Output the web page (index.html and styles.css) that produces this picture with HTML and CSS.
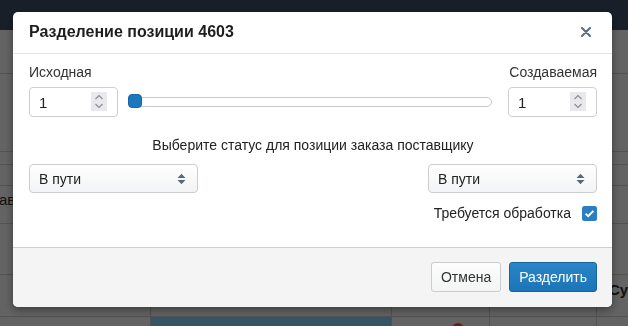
FILE: index.html
```html
<!DOCTYPE html>
<html lang="ru">
<head>
    <meta charset="UTF-8">
    <meta name="viewport" content="width=device-width, initial-scale=1.0">
    <title>Разделение позиции</title>
    <link rel="stylesheet" href="styles.css">
</head>
<body>
    <div class="page">
        <div class="navbar"></div>
        <div class="table">
            <div class="trow h44"></div>
            <div class="trow h78"></div>
            <div class="trow h13"></div>
            <div class="trow h21"></div>
            <div class="trow h38"><span class="cut-left">ав</span></div>
            <div class="trow h51"></div>
            <div class="trow cols h42">
                <div class="cell c1"></div>
                <div class="cell c2"></div>
                <div class="cell c3"></div>
                <div class="cell c4"></div>
                <div class="cell c5"><span class="cut-right">Су</span></div>
            </div>
            <div class="trow cols last">
                <div class="cell c1"></div>
                <div class="cell c2 selected"></div>
                <div class="cell c3"><span class="dot"></span></div>
                <div class="cell c4"></div>
                <div class="cell c5"></div>
            </div>
        </div>
    </div>

    <div class="backdrop"></div>

    <div class="modal">
        <div class="modal-header">
            <h4 class="modal-title">Разделение позиции 4603</h4>
            <button class="close" type="button">
                <svg width="10" height="10" viewBox="0 0 10 10"><path d="M1 1L9 9M9 1L1 9" stroke="#5c6b7a" stroke-width="2" stroke-linecap="round"/></svg>
            </button>
        </div>

        <div class="modal-body">
            <div class="qty-labels">
                <span>Исходная</span>
                <span>Создаваемая</span>
            </div>
            <div class="qty-row">
                <div class="num-input">
                    <span class="num-value">1</span>
                    <span class="spin">
                        <svg width="16" height="19" viewBox="0 0 16 19"><path d="M4.5 7L8 3.5L11.5 7" fill="none" stroke="#8a8a93" stroke-width="1.1"/><path d="M4.5 12L8 15.5L11.5 12" fill="none" stroke="#8a8a93" stroke-width="1.1"/></svg>
                    </span>
                </div>
                <div class="slider">
                    <div class="track">
                        <span class="thumb" style="left: 0%"></span>
                    </div>
                </div>
                <div class="num-input">
                    <span class="num-value">1</span>
                    <span class="spin">
                        <svg width="16" height="19" viewBox="0 0 16 19"><path d="M4.5 7L8 3.5L11.5 7" fill="none" stroke="#8a8a93" stroke-width="1.1"/><path d="M4.5 12L8 15.5L11.5 12" fill="none" stroke="#8a8a93" stroke-width="1.1"/></svg>
                    </span>
                </div>
            </div>

            <div class="status-title">Выберите статус для позиции заказа поставщику</div>
            <div class="status-row">
                <div class="select">
                    <span>В пути</span>
                    <svg width="9" height="12" viewBox="0 0 9 12"><path d="M0.5 5L4.5 0.8L8.5 5Z M0.5 7L4.5 11.2L8.5 7Z" fill="#5b6977"/></svg>
                </div>
                <div class="select">
                    <span>В пути</span>
                    <svg width="9" height="12" viewBox="0 0 9 12"><path d="M0.5 5L4.5 0.8L8.5 5Z M0.5 7L4.5 11.2L8.5 7Z" fill="#5b6977"/></svg>
                </div>
            </div>

            <label class="check-row">
                <span>Требуется обработка</span>
                <svg width="15" height="15" viewBox="0 0 15 15"><rect x="0" y="0" width="15" height="15" rx="2.5" fill="#2a7fc4"/><path d="M3.6 7.6L6.2 10.1L11.4 4.9" fill="none" stroke="#fff" stroke-width="2"/></svg>
            </label>
        </div>

        <div class="modal-footer">
            <button class="btn btn-default" type="button">Отмена</button>
            <button class="btn btn-primary" type="button">Разделить</button>
        </div>
    </div>
</body>
</html>
```

FILE: styles.css
```css
* {
    box-sizing: border-box;
}

body {
    margin: 0;
    font-family: "Liberation Sans", Arial, sans-serif;
    font-size: 14px;
    color: #333;
    background: #c6c6c6;
    height: 326px;
    overflow: hidden;
}

/* page behind the dialog */
.navbar {
    height: 30px;
    background: #303f52;
}

.trow {
    border-bottom: 1px solid #a4a4a4;
    position: relative;
}

.h44 { height: 44px; }
.h78 { height: 78px; }
.h13 { height: 13px; }
.h21 { height: 21px; }
.h38 { height: 38px; }
.h51 { height: 51px; }
.h42 { height: 42px; }

.cut-left {
    position: absolute;
    left: -1px;
    top: 5px;
    font-size: 15px;
    color: #222;
}

.cols {
    display: flex;
}

.last {
    height: 9px;
    border-bottom: 0;
}

.cell {
    border-right: 1px solid #a4a4a4;
    position: relative;
}

.c1 { width: 151px; }
.c2 { width: 241px; }
.c3 { width: 98px; }
.c4 { width: 107px; }
.c5 { flex: 1; border-right: 0; }

.selected {
    background: #6ea8c8;
}

.cut-right {
    position: absolute;
    left: 12px;
    top: 6px;
    font-size: 15px;
    font-weight: bold;
    color: #222;
}

.dot {
    position: absolute;
    left: 60px;
    top: 6px;
    width: 12px;
    height: 12px;
    border-radius: 50%;
    background: #d23a32;
}

.backdrop {
    position: fixed;
    inset: 0;
    background: rgba(0, 0, 0, 0.5);
}

/* dialog */
.modal {
    position: fixed;
    top: 12px;
    left: 13px;
    width: 599px;
    background: #fff;
    border-radius: 5px;
    box-shadow: 0 3px 9px rgba(0, 0, 0, 0.4);
    overflow: hidden;
}

.modal-header {
    display: flex;
    justify-content: space-between;
    align-items: center;
    padding: 10px 21px 11px 16px;
    border-bottom: 1px solid #e5e5e5;
}

.modal-title {
    margin: 0;
    font-size: 16px;
    line-height: 20px;
    font-weight: bold;
    color: #1e1e1e;
}

.close {
    border: 0;
    background: none;
    padding: 0;
    width: 10px;
    height: 10px;
    display: flex;
    cursor: pointer;
}

.modal-body {
    padding: 8px 15px 24px 16px;
}

.qty-labels {
    display: flex;
    justify-content: space-between;
    line-height: 20px;
}

.qty-row {
    display: flex;
    align-items: center;
    margin-top: 5px;
}

.num-input {
    width: 89px;
    height: 30px;
    border: 1px solid #cfcfcf;
    border-radius: 4px;
    display: flex;
    align-items: center;
    justify-content: space-between;
    padding: 0 10px 0 9px;
    font-size: 15px;
    color: #222;
}

.spin {
    display: flex;
    width: 16px;
    height: 19px;
    background: #e9e9ed;
    margin-top: -1px;
}

.slider {
    flex: 1;
    margin: 0 16px 0 10px;
}

.track {
    position: relative;
    height: 10px;
    border: 1px solid #c9c9c9;
    border-radius: 5px;
    background: #fff;
}

.thumb {
    position: absolute;
    top: -4px;
    width: 14px;
    height: 14px;
    margin-left: -1px;
    border-radius: 4px;
    background: #1a78bd;
    border: 1px solid #1766a6;
}

.status-title {
    margin-top: 18px;
    text-align: center;
    line-height: 20px;
    color: #222;
}

.status-row {
    display: flex;
    justify-content: space-between;
    margin-top: 9px;
}

.select {
    width: 169px;
    height: 29px;
    border: 1px solid #cdcdcd;
    border-radius: 4px;
    background: linear-gradient(#fff, #f2f3f4);
    display: flex;
    align-items: center;
    justify-content: space-between;
    padding: 0 11px 0 9px;
    color: #222;
}

.check-row {
    display: flex;
    justify-content: flex-end;
    align-items: center;
    gap: 11px;
    margin-top: 10px;
    line-height: 20px;
    color: #222;
}

.modal-footer {
    display: flex;
    justify-content: flex-end;
    gap: 8px;
    padding: 14px 15px 15px;
    border-top: 1px solid #cfcfcf;
    background: #f4f4f4;
}

.btn {
    height: 30px;
    padding: 0 9px;
    border-radius: 3px;
    font-family: "Liberation Sans", Arial, sans-serif;
    font-size: 14px;
    cursor: pointer;
}

.btn-default {
    background: linear-gradient(#fdfdfd, #f3f4f5);
    border: 1px solid #cccccc;
    color: #333;
}

.btn-primary {
    background: linear-gradient(#2a86c8, #1b74b6);
    border: 1px solid #17639c;
    color: #fff;
}
```
